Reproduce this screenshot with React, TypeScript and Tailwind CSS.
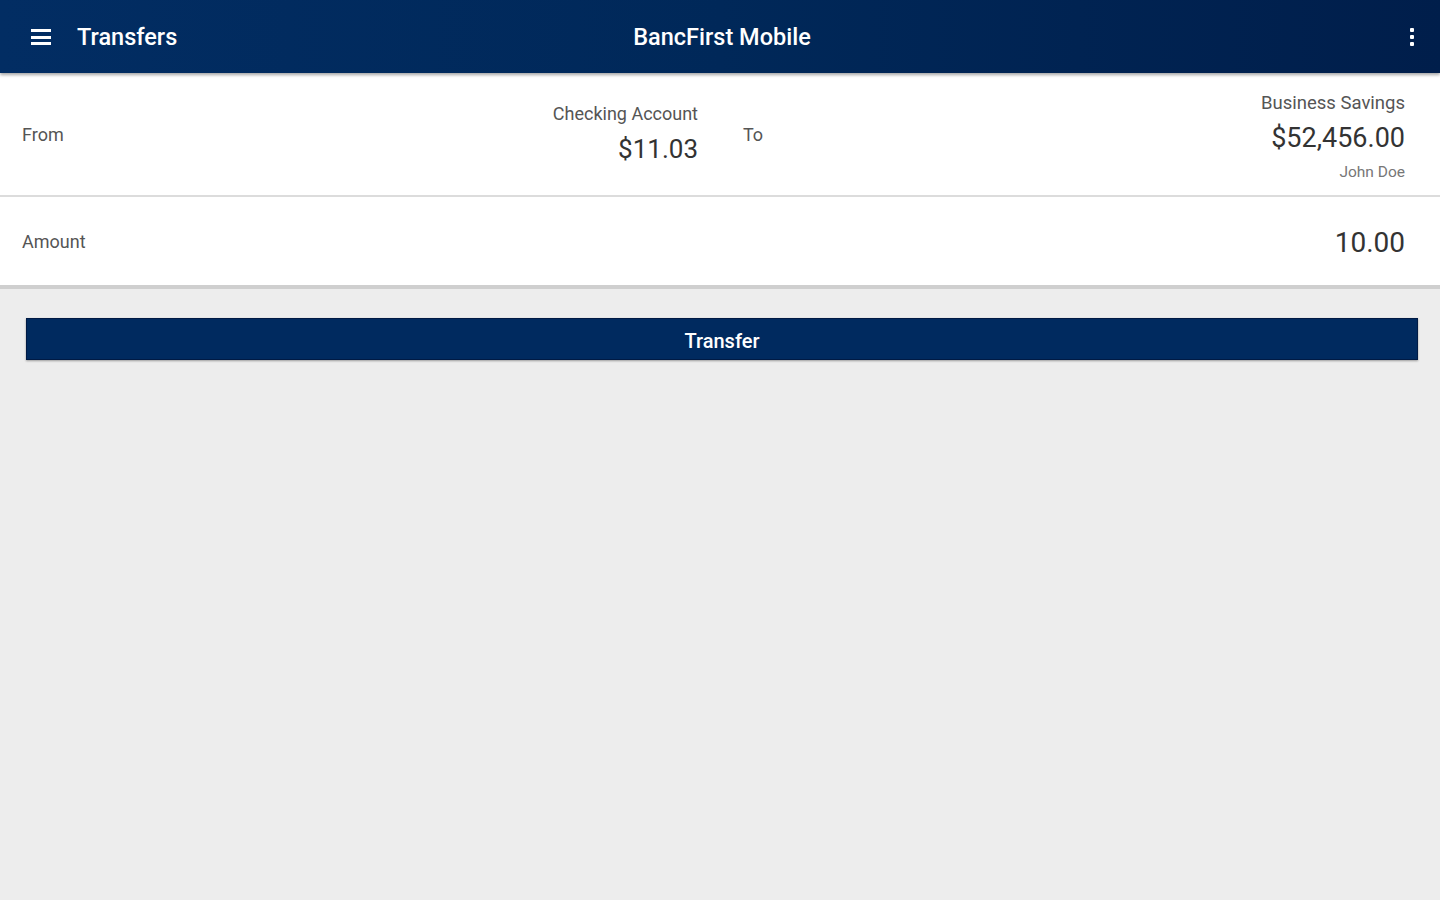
import React from "react";

export default function App() {
  return (
    <div
      className="w-[1440px] h-[900px] bg-[#ededed] flex flex-col"
      style={{ fontFamily: "Roboto, 'Noto Sans', Arial, sans-serif" }}
    >
      {/* Header */}
      <div className="relative h-[73px] shrink-0 bg-gradient-to-r from-[#022d63] via-[#002859] to-[#001e4b] flex items-center pl-[31px] pr-[26px] shadow-[0_2px_3px_rgba(0,0,0,0.35)] z-10">
        <div className="flex flex-col gap-[3.5px] w-[20px] mt-[1px]">
          <div className="h-[3px] bg-white" />
          <div className="h-[3px] bg-white" />
          <div className="h-[3px] bg-white" />
        </div>
        <div className="ml-[26px] mt-[3px] text-white text-[23.5px] font-medium">Transfers</div>
        <div className="absolute left-0 right-0 top-0 h-[73px] flex items-center justify-center pointer-events-none">
          <div className="text-white text-[23.5px] font-medium ml-[4px] mt-[3px]">BancFirst Mobile</div>
        </div>
        <div className="ml-auto flex flex-col items-center gap-[3px] mt-[1px]">
          <div className="w-[4px] h-[4px] bg-white rounded-[1px]" />
          <div className="w-[4px] h-[4px] bg-white rounded-[1px]" />
          <div className="w-[4px] h-[4px] bg-white rounded-[1px]" />
        </div>
      </div>

      {/* From / To row */}
      <div className="h-[124px] shrink-0 bg-white flex border-b-[2px] border-[#dcdcdc]">
        <div className="w-[720px] flex items-center pl-[22px] pr-[22px]">
          <div className="text-[18px] text-[#555]">From</div>
          <div className="ml-auto self-start pt-[30px] flex flex-col items-end">
            <div className="text-[18px] text-[#555] leading-[22px]">Checking Account</div>
            <div className="text-[26px] text-[#333] leading-[34px] mt-[7px]">$11.03</div>
          </div>
        </div>
        <div className="flex-1 flex items-center pl-[23px] pr-[35px]">
          <div className="text-[18px] text-[#555]">To</div>
          <div className="ml-auto self-start pt-[19px] flex flex-col items-end">
            <div className="text-[18.5px] text-[#555] leading-[22px]">Business Savings</div>
            <div className="text-[27px] text-[#333] leading-[34px] mt-[7px]">$52,456.00</div>
            <div className="text-[15.5px] text-[#777] leading-[20px] mt-[7px]">John Doe</div>
          </div>
        </div>
      </div>

      {/* Amount row */}
      <div className="h-[92px] shrink-0 bg-white flex items-center pl-[22px] pr-[35px] border-b-[4px] border-[#cfcfcf]">
        <div className="text-[18px] text-[#555]">Amount</div>
        <div className="ml-auto mt-[3px] text-[28px] text-[#333]">10.00</div>
      </div>

      {/* Button */}
      <div className="pl-[26px] pr-[22px] pt-[29px]">
        <div className="h-[42px] bg-[#002a5f] border border-[#001a44] flex items-center justify-center shadow-[0_1px_2px_rgba(0,0,0,0.35)]">
          <span className="text-white text-[20px] font-medium mt-[4px]">Transfer</span>
        </div>
      </div>
    </div>
  );
}
